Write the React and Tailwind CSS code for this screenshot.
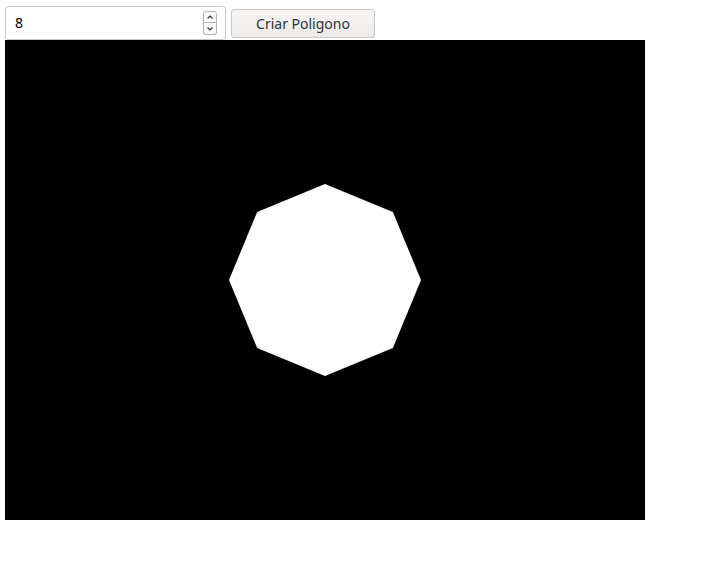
import React from "react";

export default function App() {
  const cx = 320, cy = 240, r = 96;
  const pts = Array.from({ length: 8 }, (_, i) => {
    const a = (i * Math.PI) / 4;
    return `${(cx + r * Math.sin(a)).toFixed(2)},${(cy - r * Math.cos(a)).toFixed(2)}`;
  }).join(" ");
  return (
    <div className="w-[718px] h-[568px] bg-white" style={{ fontFamily: '"Noto Sans", "Open Sans", sans-serif' }}>
      <div className="flex items-start pl-[5px] pt-[6px]">
        <div className="relative w-[221px] h-[34px] border border-[#cdc7c2] rounded-[3px] bg-white flex items-center">
          <span className="ml-[9px] text-[14px] text-[#000000] leading-none">8</span>
          <div className="absolute left-[197px] top-[4px] w-[14px] h-[24px] flex flex-col">
            <div className="h-[12px] border border-[#b6b1ab] rounded-t-[3px] flex items-center justify-center bg-white">
              <svg width="8" height="6" viewBox="0 0 8 6"><path d="M1.5 4.5 L4 2 L6.5 4.5" stroke="#2e3436" strokeWidth="1.2" fill="none" /></svg>
            </div>
            <div className="h-[12px] border border-t-0 border-[#b6b1ab] rounded-b-[3px] flex items-center justify-center bg-white">
              <svg width="8" height="6" viewBox="0 0 8 6"><path d="M1.5 1.5 L4 4 L6.5 1.5" stroke="#2e3436" strokeWidth="1.2" fill="none" /></svg>
            </div>
          </div>
        </div>
        <button className="ml-[5px] mt-[3px] w-[144px] h-[29px] border border-[#cdc7c2] rounded-[3px] bg-gradient-to-b from-[#f6f5f4] to-[#edebe9] text-[14px] text-[#2e3436] flex items-center justify-center leading-none">
          Criar Poligono
        </button>
      </div>
      <div className="ml-[5px] w-[640px] h-[480px] bg-black">
        <svg width="640" height="480" viewBox="0 0 640 480" className="block">
          <polygon points={pts} fill="#ffffff" />
        </svg>
      </div>
    </div>
  );
}
